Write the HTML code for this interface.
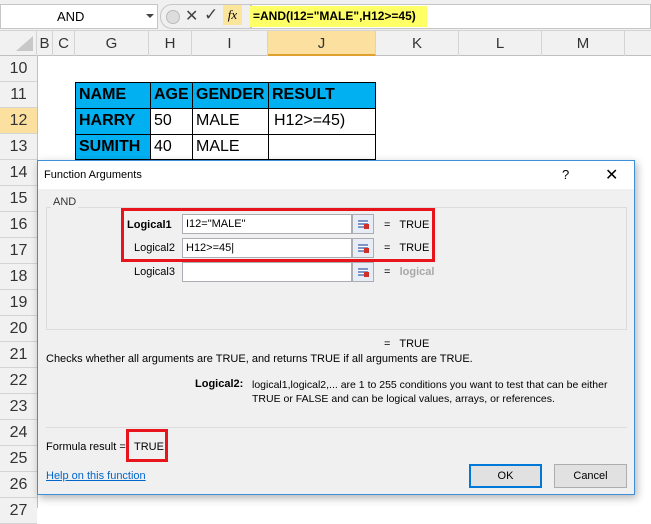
<!DOCTYPE html><html><head><style>
*{margin:0;padding:0;box-sizing:border-box}
body{width:651px;height:508px;overflow:hidden;background:#fff;font-family:"Liberation Sans",sans-serif;position:relative}
.a{position:absolute}
.ch{position:absolute;top:31px;height:25px;border-right:1px solid #d4d4d4;text-align:center;font-size:15px;line-height:25px;color:#333}
.rh{position:absolute;left:0;width:37px;height:26px;border-bottom:1px solid #d4d4d4;text-align:center;font-size:16px;line-height:26px;color:#333;background:#f1f1f1}
.c{position:absolute;border:1px solid #000;font-size:16px;line-height:24px;padding-left:3px}
.hd{background:#00b0f0;font-weight:bold}
.d{font-size:11px;color:#000;white-space:nowrap}
.in{position:absolute;left:182px;width:170px;height:20px;border:1px solid #abadb3;background:#fff;font-size:11px;line-height:18px;padding-left:3px}
.rb{position:absolute;left:352px;width:22px;height:20px;border:1px solid #abadb3;background:#e8ecf4}
.rb:after{content:"";position:absolute;left:5px;top:5px;width:10px;height:8px;background:linear-gradient(#7d95c4 0 2px,#fff 2px 3px,#7d95c4 3px 5px,#fff 5px 6px,#7d95c4 6px);}
.rb:before{content:"";position:absolute;left:11px;top:9px;width:5px;height:5px;background:#d0302a;z-index:1}
</style></head><body>
<div class="a" style="left:0;top:0;width:651px;height:31px;background:#f0f0f0;border-bottom:1px solid #d4d4d4"></div>
<div class="a" style="left:0;top:4px;width:158px;height:25px;background:#fff;border:1px solid #c6c6c6;font-size:13px;line-height:23px;padding-left:56px">AND</div>
<div class="a" style="left:146px;top:14px;border:4px solid transparent;border-top:4px solid #444"></div>
<div class="a" style="left:160px;top:4px;width:91px;height:25px;background:#f0f0f0;border:1px solid #c6c6c6;border-radius:12px 0 0 12px"></div>
<div class="a" style="left:166px;top:10px;width:14px;height:14px;border-radius:7px;background:#ddd;border:1px solid #bbb"></div>
<div class="a" style="left:185px;top:6px;font-size:16px;color:#444">✕</div>
<div class="a" style="left:204px;top:5px;font-size:17px;color:#444">✓</div>
<div class="a" style="left:223px;top:5px;width:19px;height:20px;background:#fbe59a;font-family:'Liberation Serif',serif;font-style:italic;font-size:13px;text-align:center;line-height:20px">fx</div>
<div class="a" style="left:251px;top:4px;width:400px;height:25px;background:#fff;border:1px solid #c6c6c6"></div>
<div class="a" style="left:249px;top:6px;width:178px;height:21px;background:#ffff66;font-size:12px;font-weight:bold;line-height:21px;padding-left:4px;white-space:nowrap">=AND(I12="MALE",H12&gt;=45)</div>
<div class="a" style="left:0;top:31px;width:651px;height:25px;background:#f1f1f1;border-bottom:1px solid #bfbfbf"></div>
<div class="a" style="left:16px;top:36px;border-left:17px solid transparent;border-bottom:15px solid #c8c8c8"></div>
<div class="ch" style="left:0;width:37px"></div>
<div class="ch" style="left:37px;width:16px">B</div>
<div class="ch" style="left:53px;width:22px">C</div>
<div class="ch" style="left:75px;width:74px">G</div>
<div class="ch" style="left:149px;width:43px">H</div>
<div class="ch" style="left:192px;width:76px">I</div>
<div class="ch" style="left:268px;width:108px;background:#fbe0a0;border-bottom:2px solid #e0a030">J</div>
<div class="ch" style="left:376px;width:83px">K</div>
<div class="ch" style="left:459px;width:83px">L</div>
<div class="ch" style="left:542px;width:83px">M</div>
<div class="rh" style="top:56px">10</div>
<div class="rh" style="top:82px">11</div>
<div class="rh" style="top:108px;background:#fbe0a0">12</div>
<div class="rh" style="top:134px">13</div>
<div class="rh" style="top:160px">14</div>
<div class="rh" style="top:186px">15</div>
<div class="rh" style="top:212px">16</div>
<div class="rh" style="top:238px">17</div>
<div class="rh" style="top:264px">18</div>
<div class="rh" style="top:290px">19</div>
<div class="rh" style="top:316px">20</div>
<div class="rh" style="top:342px">21</div>
<div class="rh" style="top:368px">22</div>
<div class="rh" style="top:394px">23</div>
<div class="rh" style="top:420px">24</div>
<div class="rh" style="top:446px">25</div>
<div class="rh" style="top:472px">26</div>
<div class="rh" style="top:498px">27</div>
<div class="a" style="left:37px;top:56px;width:1px;height:452px;background:#bfbfbf"></div>
<div class="c hd" style="left:75px;top:82px;width:76px;height:27px">NAME</div>
<div class="c hd" style="left:150px;top:82px;width:43px;height:27px">AGE</div>
<div class="c hd" style="left:192px;top:82px;width:77px;height:27px">GENDER</div>
<div class="c hd" style="left:268px;top:82px;width:108px;height:27px">RESULT</div>
<div class="c hd" style="left:75px;top:108px;width:76px;height:27px">HARRY</div>
<div class="c" style="left:150px;top:108px;width:43px;height:27px">50</div>
<div class="c" style="left:192px;top:108px;width:77px;height:27px">MALE</div>
<div class="c" style="left:268px;top:108px;width:108px;height:27px;padding-left:5px">H12&gt;=45)</div>
<div class="c hd" style="left:75px;top:134px;width:76px;height:26px">SUMITH</div>
<div class="c" style="left:150px;top:134px;width:43px;height:26px">40</div>
<div class="c" style="left:192px;top:134px;width:77px;height:26px">MALE</div>
<div class="c" style="left:268px;top:134px;width:108px;height:26px"></div>
<div class="a" style="left:37px;top:160px;width:598px;height:335px;background:#f0f0f0;border:1px solid #3c8fd8;box-shadow:2px 3px 8px rgba(0,0,0,.3)">
<div class="a" style="left:0;top:0;width:596px;height:28px;background:#fff"></div>
<div class="a d" style="left:6px;top:8px">Function Arguments</div>
<div class="a" style="left:524px;top:6px;font-size:13px">?</div>
<div class="a" style="left:567px;top:4px;font-size:16px">✕</div>
</div>
<div class="a" style="left:46px;top:207px;width:581px;height:123px;border:1px solid #dcdcdc"></div>
<div class="a d" style="left:51px;top:196px;background:#f0f0f0;padding:0 2px;color:#333">AND</div>
<div class="a" style="left:121px;top:208px;width:314px;height:54px;border:3px solid #e8141c"></div>
<div class="a d" style="left:127px;top:219px;font-weight:bold">Logical1</div>
<div class="a d" style="left:134px;top:242px">Logical2</div>
<div class="a d" style="left:134px;top:266px">Logical3</div>
<div class="in" style="top:214px">I12="MALE"</div>
<div class="in" style="top:238px">H12&gt;=45|</div>
<div class="in" style="top:262px"></div>
<div class="rb" style="top:214px"></div><div class="rb" style="top:238px"></div><div class="rb" style="top:262px"></div>
<div class="a d" style="left:384px;top:219px">=&nbsp;&nbsp; TRUE</div>
<div class="a d" style="left:384px;top:242px">=&nbsp;&nbsp; TRUE</div>
<div class="a d" style="left:384px;top:266px"><span>=</span>&nbsp;&nbsp; <b style="color:#a8a8a8">logical</b></div>
<div class="a d" style="left:384px;top:338px">=&nbsp;&nbsp; TRUE</div>
<div class="a d" style="left:46px;top:353px">Checks whether all arguments are TRUE, and returns TRUE if all arguments are TRUE.</div>
<div class="a d" style="left:195px;top:378px;font-weight:bold">Logical2:</div>
<div class="a d" style="left:252px;top:378px;line-height:14px;font-size:10.5px">logical1,logical2,... are 1 to 255 conditions you want to test that can be either<br>TRUE or FALSE and can be logical values, arrays, or references.</div>
<div class="a" style="left:46px;top:427px;width:581px;height:1px;background:#dcdcdc"></div>
<div class="a d" style="left:46px;top:441px">Formula result =</div>
<div class="a" style="left:126px;top:429px;width:42px;height:33px;border:3px solid #e8141c"></div>
<div class="a d" style="left:134px;top:441px">TRUE</div>
<div class="a d" style="left:46px;top:470px;color:#0066cc;text-decoration:underline">Help on this function</div>
<div class="a d" style="left:469px;top:464px;width:73px;height:24px;border:2px solid #0078d7;background:#e1e1e1;text-align:center;line-height:20px">OK</div>
<div class="a d" style="left:554px;top:464px;width:73px;height:24px;border:1px solid #adadad;background:#e1e1e1;text-align:center;line-height:22px">Cancel</div>
</body></html>
